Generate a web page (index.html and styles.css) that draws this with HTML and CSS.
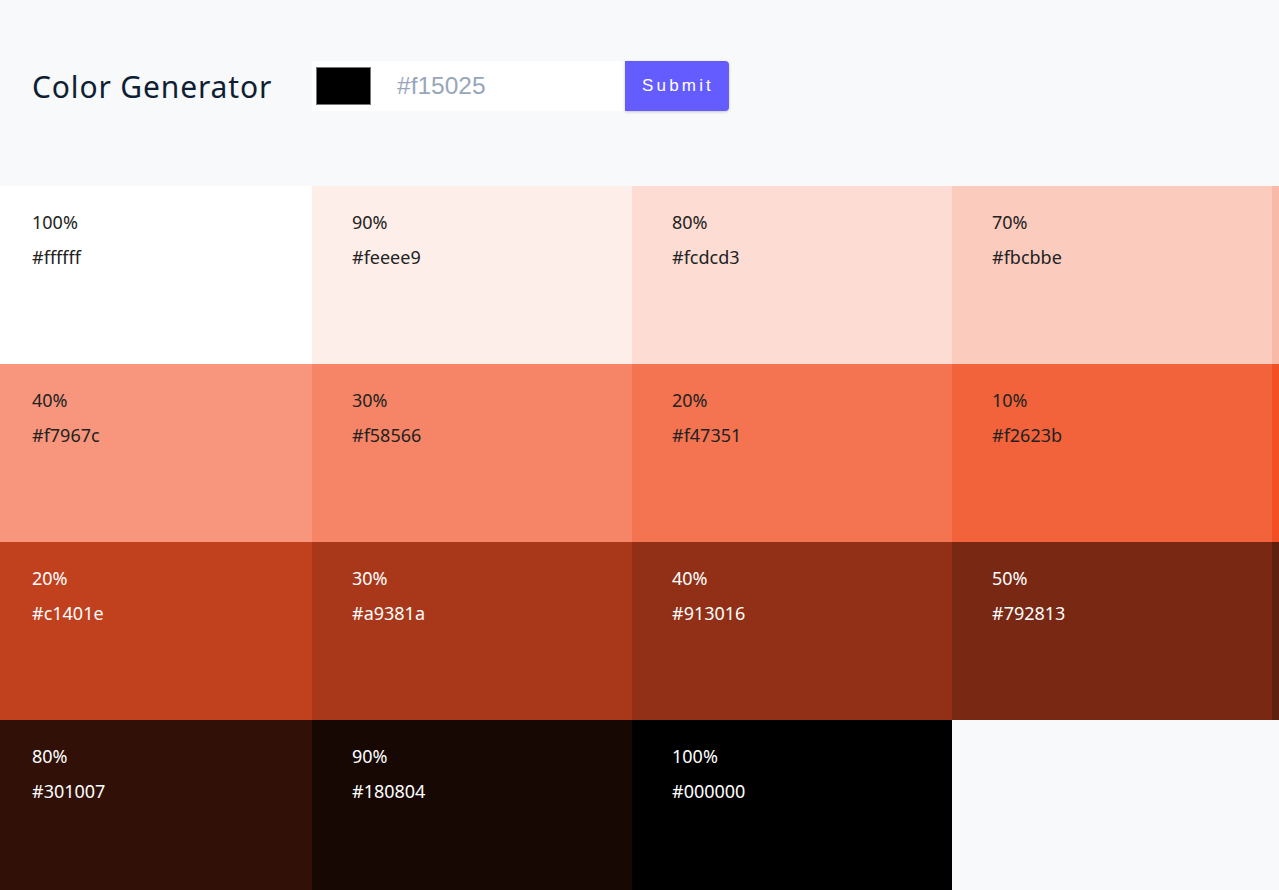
FILE: index.html
```html
<!DOCTYPE html>
<html lang="en">
<head>
<meta charset="utf-8">
<title>Color Generator</title>
<link rel="stylesheet" href="styles.css">
</head>
<body>
<div class="page">
  <section class="container">
    <h3 class="title">Color Generator</h3>
    <form class="form">
      <input class="picker" type="color" value="#000000">
      <input class="hex-input" type="text" placeholder="#f15025">
      <button class="btn" type="submit">Submit</button>
    </form>
  </section>
  <section class="colors">
    <article class="color" style="background:#ffffff"><p class="percent">100%</p><p class="hex">#ffffff</p></article>
    <article class="color" style="background:#feeee9"><p class="percent">90%</p><p class="hex">#feeee9</p></article>
    <article class="color" style="background:#fcdcd3"><p class="percent">80%</p><p class="hex">#fcdcd3</p></article>
    <article class="color" style="background:#fbcbbe"><p class="percent">70%</p><p class="hex">#fbcbbe</p></article>
    <article class="color" style="background:#f9b9a8"><p class="percent">60%</p><p class="hex">#f9b9a8</p></article>
    <article class="color" style="background:#f8a892"><p class="percent">50%</p><p class="hex">#f8a892</p></article>
    <article class="color" style="background:#f7967c"><p class="percent">40%</p><p class="hex">#f7967c</p></article>
    <article class="color" style="background:#f58566"><p class="percent">30%</p><p class="hex">#f58566</p></article>
    <article class="color" style="background:#f47351"><p class="percent">20%</p><p class="hex">#f47351</p></article>
    <article class="color" style="background:#f2623b"><p class="percent">10%</p><p class="hex">#f2623b</p></article>
    <article class="color" style="background:#f15025"><p class="percent">0%</p><p class="hex">#f15025</p></article>
    <article class="color light" style="background:#d94821"><p class="percent">10%</p><p class="hex">#d94821</p></article>
    <article class="color light" style="background:#c1401e"><p class="percent">20%</p><p class="hex">#c1401e</p></article>
    <article class="color light" style="background:#a9381a"><p class="percent">30%</p><p class="hex">#a9381a</p></article>
    <article class="color light" style="background:#913016"><p class="percent">40%</p><p class="hex">#913016</p></article>
    <article class="color light" style="background:#792813"><p class="percent">50%</p><p class="hex">#792813</p></article>
    <article class="color light" style="background:#60200f"><p class="percent">60%</p><p class="hex">#60200f</p></article>
    <article class="color light" style="background:#48180b"><p class="percent">70%</p><p class="hex">#48180b</p></article>
    <article class="color light" style="background:#301007"><p class="percent">80%</p><p class="hex">#301007</p></article>
    <article class="color light" style="background:#180804"><p class="percent">90%</p><p class="hex">#180804</p></article>
    <article class="color light" style="background:#000000"><p class="percent">100%</p><p class="hex">#000000</p></article>
  </section>
</div>
</body>
</html>
```
FILE: styles.css
```css
html, body {
  margin: 0;
  padding: 0;
  overflow: hidden;
}
body {
  background: #f8f9fb;
  font-family: "Noto Sans", "Open Sans", sans-serif;
  color: #222;
}
.page {
  width: 1279px;
  overflow: hidden;
}
.container {
  display: flex;
  align-items: center;
  padding: 61px 32px 75px;
  height: 50px;
}
.title {
  flex: 0 0 280px;
  margin: 0;
  font-size: 30px;
  font-weight: 400;
  letter-spacing: 0.85px;
  color: #0f1f33;
}
.form {
  display: flex;
  height: 50px;
  background: #fff;
}
.picker {
  box-sizing: border-box;
  width: 59px;
  height: 50px;
  margin: 0;
  padding: 6px 0 6px 4px;
  border: none;
  background: #fff;
  cursor: pointer;
}
.picker::-webkit-color-swatch-wrapper {
  padding: 0;
}
.picker::-webkit-color-swatch {
  border: 1px solid #767676;
  border-radius: 0;
}
.hex-input {
  box-sizing: border-box;
  width: 254px;
  height: 50px;
  border: none;
  outline: none;
  padding: 0 0 0 26px;
  font-family: "Liberation Sans", Arial, sans-serif;
  font-size: 24.5px;
  color: #333;
  background: #fff;
}
.hex-input::placeholder {
  color: #97a6ba;
}
.btn {
  box-sizing: border-box;
  width: 104px;
  height: 50px;
  border: none;
  border-radius: 0 4px 4px 0;
  background: #645cff;
  color: #fff;
  font-family: "Liberation Sans", Arial, sans-serif;
  font-size: 17px;
  letter-spacing: 3.2px;
  padding: 0 0 0 2px;
  box-shadow: 0 1px 3px rgba(0, 0, 0, 0.2);
  cursor: pointer;
}
.colors {
  display: grid;
  grid-template-columns: repeat(6, 320px);
  grid-auto-rows: 178px;
  margin-left: -8px;
}
.color {
  box-sizing: border-box;
  padding: 23px 40px 0;
  font-size: 18px;
  color: #222;
}
.color.light {
  color: #fff;
}
.color p {
  margin: 0;
  line-height: 27px;
}
.color .hex {
  margin-top: 8px;
}
```
